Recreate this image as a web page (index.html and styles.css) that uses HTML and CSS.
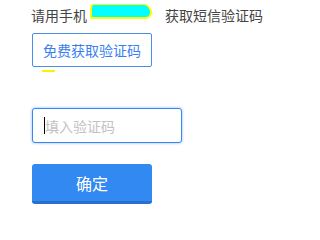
FILE: index.html
```html
<!DOCTYPE html>
<html lang="zh-CN">
<head>
<meta charset="utf-8">
<link rel="stylesheet" href="styles.css">
</head>
<body>
<div class="page">
  <p class="hint">请用手机<span class="mask"></span>获取短信验证码</p>
  <button class="btn-code" type="button">免费获取验证码</button>
  <div class="mark"></div>
  <div class="field">
    <input class="code-input" type="text" placeholder="填入验证码">
    <span class="caret"></span>
  </div>
  <button class="btn-ok" type="button">确定</button>
</div>
</body>
</html>
```
FILE: styles.css
```css
html, body {
  margin: 0;
  padding: 0;
  background: #fff;
}
.page {
  padding: 5px 0 0 32px;
  font-family: "Noto Sans CJK SC", "Noto Sans", sans-serif;
  display: flex;
  flex-direction: column;
  align-items: flex-start;
}
.hint {
  margin: 0 0 0 -1px;
  font-size: 14px;
  line-height: 20px;
  color: #444;
  display: flex;
  align-items: center;
}
.mask {
  display: inline-block;
  width: 58px;
  height: 12px;
  margin: 0 13px 0 3px;
  background: #00ffff;
  border: 2px solid #ffff00;
  border-top-width: 1px;
  border-radius: 4px 9px 7px 3px;
  position: relative;
  top: -4px;
}
.btn-code {
  margin-top: 8px;
  width: 120px;
  height: 34px;
  padding: 0;
  background: #fff;
  border: 1px solid #4a8ee9;
  border-radius: 2px;
  color: #3a7ff0;
  font-family: inherit;
  font-size: 14px;
}
.mark {
  margin: 3px 0 0 10px;
  width: 13px;
  height: 2px;
  background: #fff200;
}
.field {
  position: relative;
  margin-top: 36px;
}
.code-input {
  box-sizing: border-box;
  width: 150px;
  height: 35px;
  padding: 0 0 0 12px;
  border: 1px solid #3a86f0;
  border-radius: 3px;
  box-shadow: 0 0 3px rgba(58, 134, 240, 0.6);
  font-family: inherit;
  font-size: 14px;
  color: #333;
  outline: none;
}
.code-input::placeholder {
  color: #c2c2c2;
}
.caret {
  position: absolute;
  left: 12px;
  top: 9px;
  width: 1px;
  height: 17px;
  background: #000;
}
.btn-ok {
  margin-top: 21px;
  width: 120px;
  height: 40px;
  padding: 0;
  border: none;
  border-bottom: 3px solid #2a6fcf;
  border-radius: 3px;
  background: #3189f1;
  color: #fff;
  font-family: inherit;
  font-size: 16px;
}
```
